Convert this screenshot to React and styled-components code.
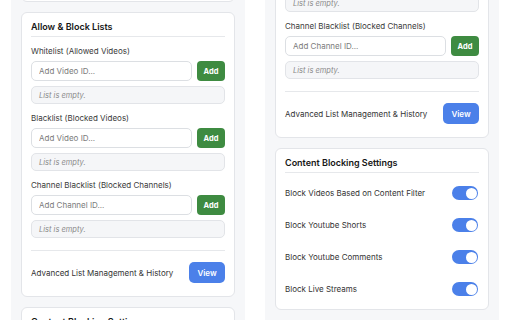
import React from 'react';
import styled, { createGlobalStyle } from 'styled-components';

const GlobalStyle = createGlobalStyle`
	html,
	body {
		margin: 0;
		background: #ffffff;
	}
	body {
		font-family: Inter, 'Liberation Sans', sans-serif;
		-webkit-font-smoothing: antialiased;
	}
`;

const lists = [
	{ label: 'Whitelist (Allowed Videos)', placeholder: 'Add Video ID...' },
	{ label: 'Blacklist (Blocked Videos)', placeholder: 'Add Video ID...' },
	{ label: 'Channel Blacklist (Blocked Channels)', placeholder: 'Add Channel ID...' },
];

const blockingOptions = [
	'Block Videos Based on Content Filter',
	'Block Youtube Shorts',
	'Block Youtube Comments',
	'Block Live Streams',
];

const Switch = ({ on }) => (
	<SwitchTrack $on={on}>
		<SwitchKnob />
	</SwitchTrack>
);

const Popup = ({ offset }) => (
	<Panel>
		<Scroller $offset={offset}>
			<Card $pb={9}>
				<CardTitle>General</CardTitle>
				<ToggleList>
					<ToggleRow>
						<RowText>Enable Extension</RowText>
						<Switch on />
					</ToggleRow>
				</ToggleList>
			</Card>

			<Card $pb={13}>
				<CardTitle>Allow &amp; Block Lists</CardTitle>
				<ListGroup>
					{lists.map((list) => (
						<ListSection key={list.label}>
							<Label>{list.label}</Label>
							<InputRow>
								<Input placeholder={list.placeholder} />
								<AddButton>Add</AddButton>
							</InputRow>
							<EmptyBox>List is empty.</EmptyBox>
						</ListSection>
					))}
				</ListGroup>
				<Footer>
					<RowText>Advanced List Management &amp; History</RowText>
					<ViewButton>View</ViewButton>
				</Footer>
			</Card>

			<Card $pb={9}>
				<CardTitle>Content Blocking Settings</CardTitle>
				<ToggleList>
					{blockingOptions.map((text) => (
						<ToggleRow key={text}>
							<RowText>{text}</RowText>
							<Switch on />
						</ToggleRow>
					))}
				</ToggleList>
			</Card>
		</Scroller>
	</Panel>
);

const App = () => (
	<>
		<GlobalStyle />
		<Page>
			<Popup offset={64} />
			<Popup offset={223} />
		</Page>
	</>
);

export default App;

const Page = styled.div`
	display: flex;
	gap: 20px;
	padding-left: 11px;
	height: 320px;
	overflow: hidden;
`;

const Panel = styled.div`
	width: 234px;
	height: 320px;
	flex-shrink: 0;
	box-sizing: border-box;
	padding: 0 10px;
	background: #f6f7f9;
	overflow: hidden;
`;

const Scroller = styled.div`
	display: flex;
	flex-direction: column;
	gap: 10px;
	margin-top: ${(p) => -p.$offset}px;
`;

const Card = styled.div`
	background: #ffffff;
	border: 1px solid #e3e5e9;
	border-radius: 6px;
	padding: 7px 9px ${(p) => p.$pb}px;
`;

const CardTitle = styled.div`
	font-size: 9px;
	font-weight: 600;
	line-height: 13px;
	color: #161616;
	padding-bottom: 3px;
	margin-bottom: 9px;
	border-bottom: 1px solid #e6e8eb;
`;

const ListGroup = styled.div`
	display: flex;
	flex-direction: column;
	gap: 9px;
`;

const ListSection = styled.div`
	display: flex;
	flex-direction: column;
	gap: 5px;
`;

const Label = styled.div`
	font-size: 8px;
	line-height: 10px;
	color: #3a3a3a;
`;

const InputRow = styled.div`
	display: flex;
	gap: 5px;
`;

const Input = styled.input`
	flex: 1;
	min-width: 0;
	height: 20px;
	box-sizing: border-box;
	border: 1px solid #dcdfe3;
	border-radius: 5px;
	padding: 0 7px;
	font-family: inherit;
	font-size: 8px;
	color: #333;
	background: #fff;
	outline: none;

	&::placeholder {
		color: #7b7b7b;
	}
`;

const AddButton = styled.button`
	width: 28px;
	height: 20px;
	padding: 0;
	border: none;
	border-radius: 4px;
	background: #3e8b41;
	color: #ffffff;
	font-family: inherit;
	font-size: 7.5px;
	font-weight: 700;
`;

const EmptyBox = styled.div`
	height: 18px;
	box-sizing: border-box;
	display: flex;
	align-items: center;
	padding: 0 7px;
	background: #f5f6f8;
	border: 1px solid #e2e4e8;
	border-radius: 5px;
	font-size: 7.5px;
	font-style: italic;
	color: #8a8a8a;
`;

const Footer = styled.div`
	display: flex;
	justify-content: space-between;
	align-items: center;
	margin-top: 12px;
	padding-top: 11px;
	border-top: 1px solid #e6e8eb;
`;

const RowText = styled.div`
	font-size: 8px;
	line-height: 10px;
	color: #333333;
`;

const ViewButton = styled.button`
	width: 36px;
	height: 21px;
	padding: 0;
	border: none;
	border-radius: 5px;
	background: #4b80e9;
	color: #ffffff;
	font-family: inherit;
	font-size: 8px;
	font-weight: 600;
`;

const ToggleList = styled.div`
	display: flex;
	flex-direction: column;
	gap: 10px;
`;

const ToggleRow = styled.div`
	height: 22px;
	display: flex;
	justify-content: space-between;
	align-items: center;
`;

const SwitchTrack = styled.div`
	width: 26px;
	height: 14px;
	box-sizing: border-box;
	padding: 1.5px;
	border-radius: 7px;
	display: flex;
	justify-content: ${(p) => (p.$on ? 'flex-end' : 'flex-start')};
	align-items: center;
	background: ${(p) => (p.$on ? '#4b80e9' : '#cfd3d9')};
	margin-right: 1px;
`;

const SwitchKnob = styled.div`
	width: 11px;
	height: 11px;
	border-radius: 50%;
	background: #ffffff;
`;
